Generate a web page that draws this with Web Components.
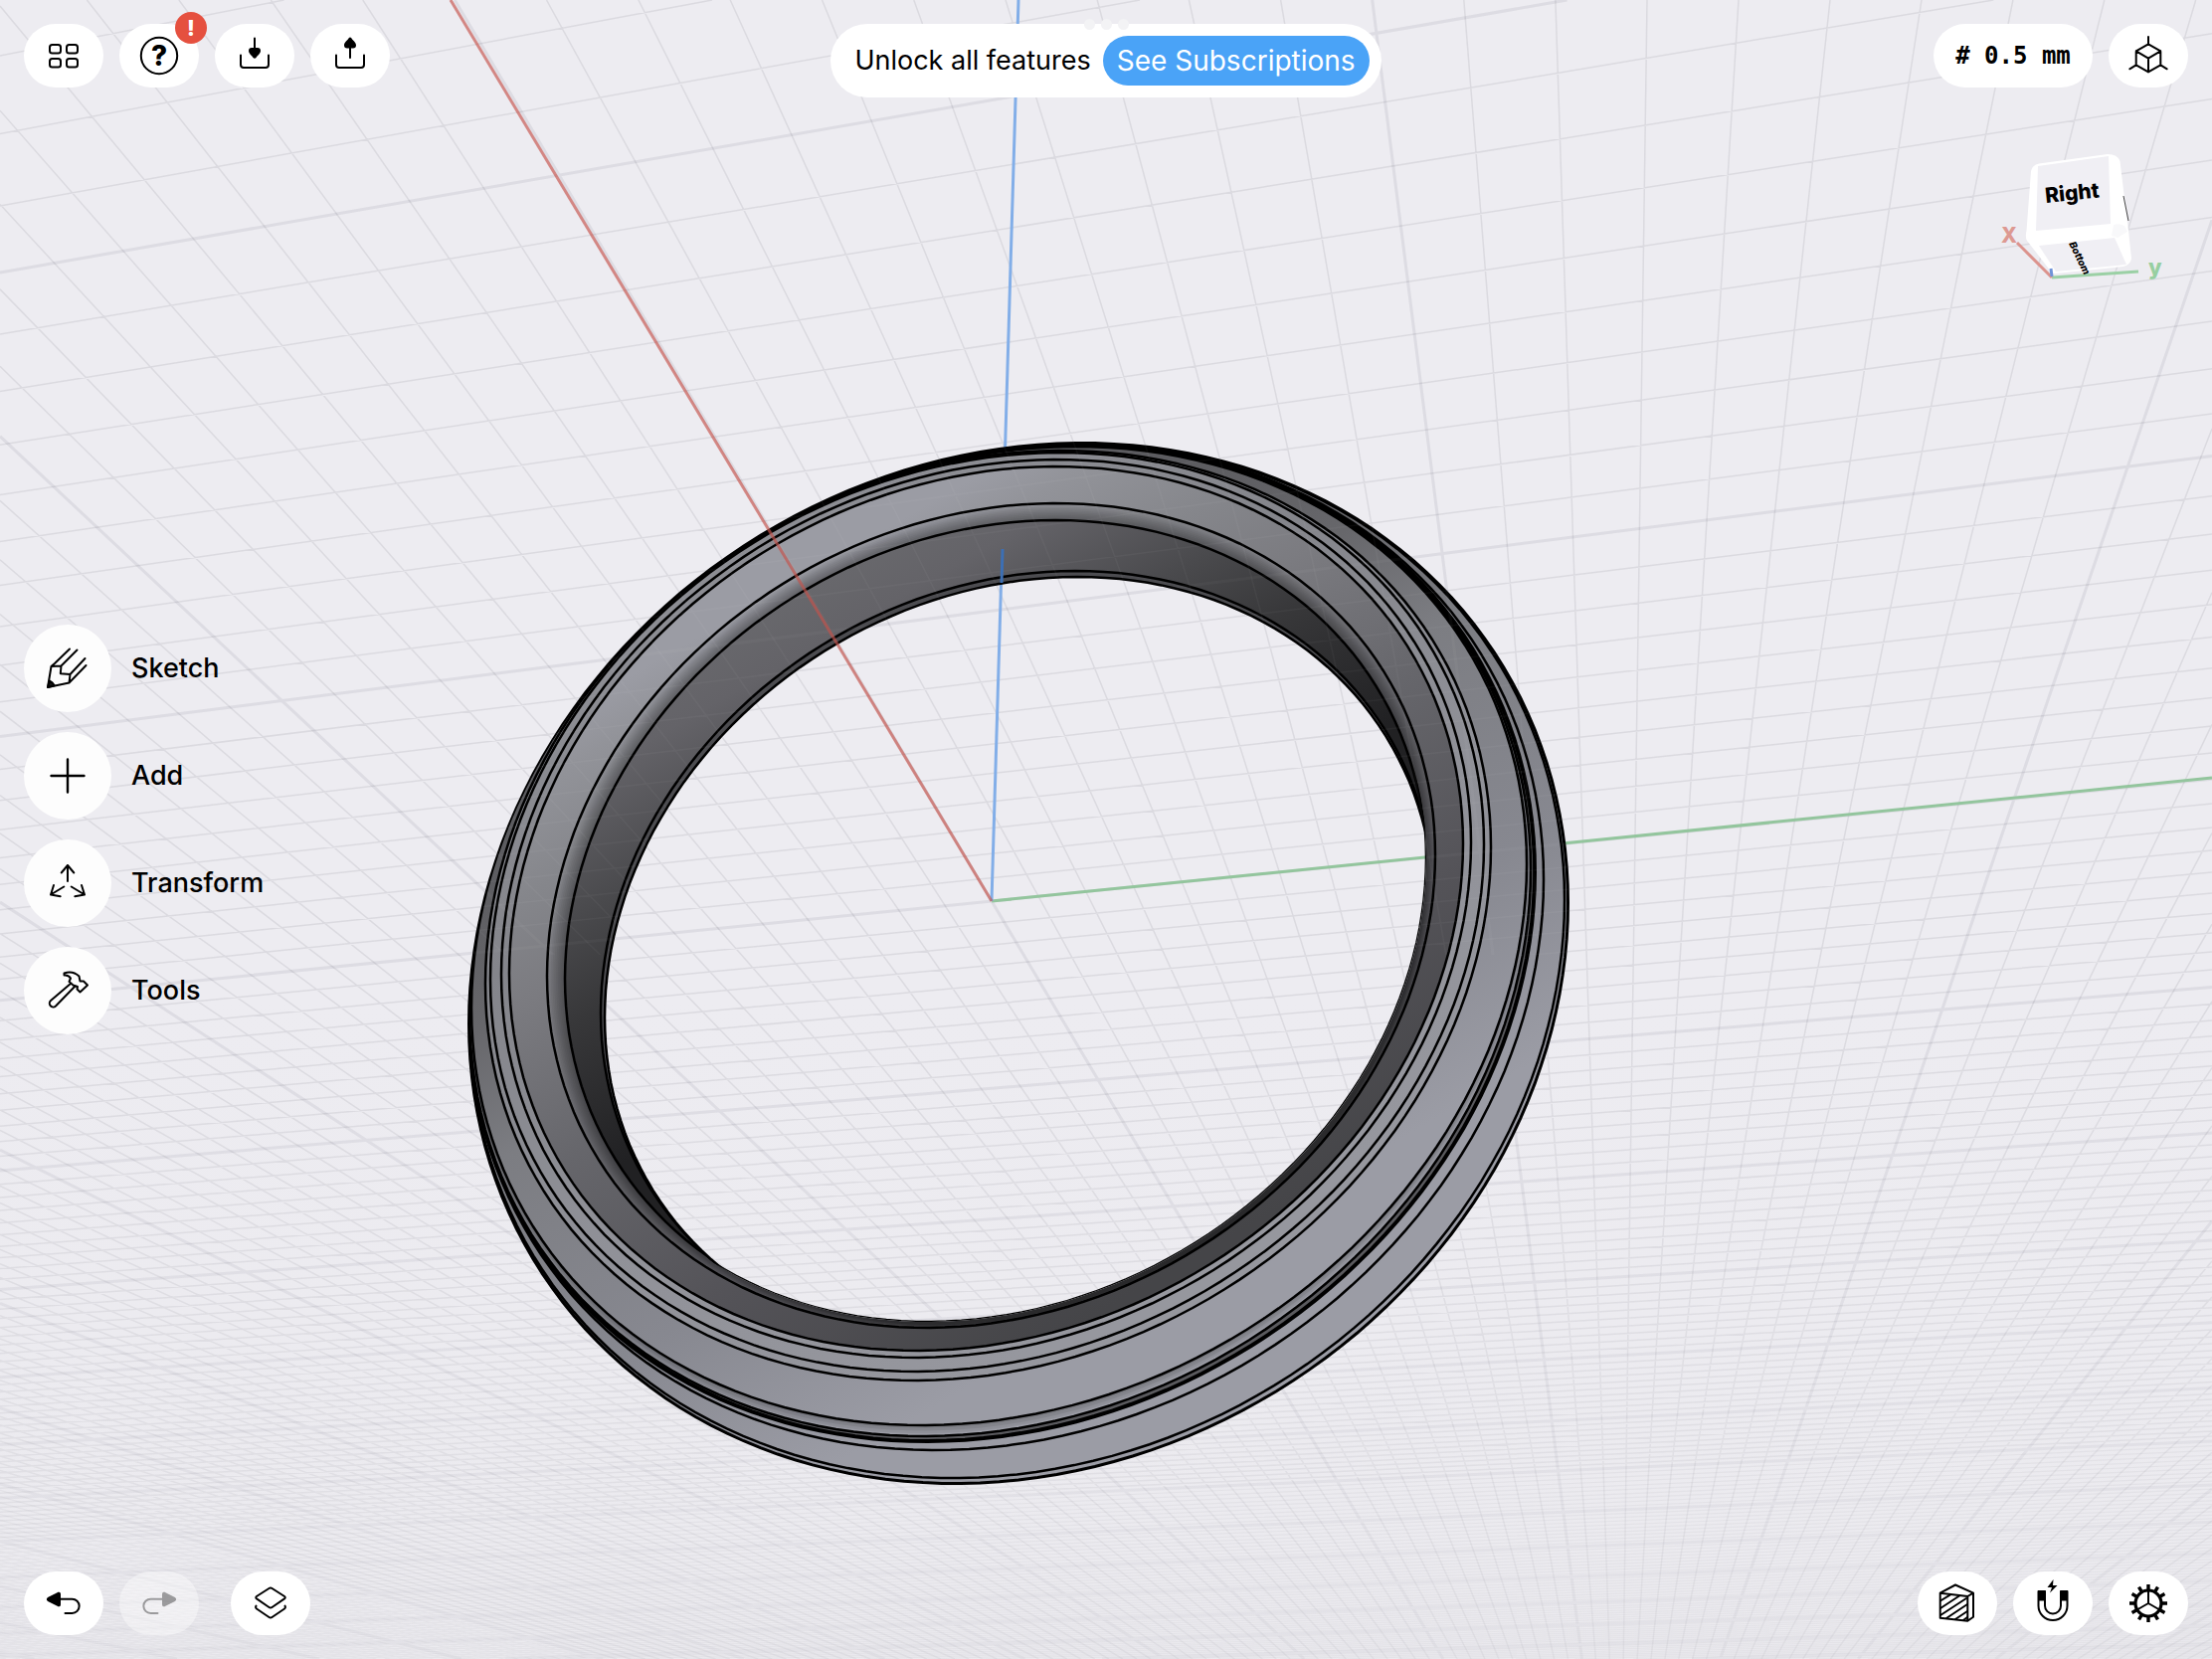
<!DOCTYPE html>
<html lang="en">
<head>
<meta charset="utf-8">
<title>Modeling workspace</title>
<style>
    body
    {
        margin: 0;
        background: #edecf1;
        color: #000;
        font-family: Inter, "Liberation Sans", sans-serif;
    }
</style>
</head>
<body>
<cad-workspace>
    <model-view slot="scene"></model-view>

    <tool-group slot="top-left">
        <pill-button icon="grid" label="Designs"></pill-button>
        <pill-button icon="help" label="Help" badge="!"></pill-button>
        <pill-button icon="import" label="Import"></pill-button>
        <pill-button icon="export" label="Export"></pill-button>
    </tool-group>

    <subscribe-banner slot="top-center">
        Unlock all features
        <span slot="action">See Subscriptions</span>
    </subscribe-banner>

    <tool-group slot="top-right">
        <pill-button wide label="Grid snap"># 0.5 mm</pill-button>
        <pill-button icon="iso" label="Views"></pill-button>
    </tool-group>

    <side-menu slot="left">
        <menu-item icon="sketch">Sketch</menu-item>
        <menu-item icon="add">Add</menu-item>
        <menu-item icon="transform">Transform</menu-item>
        <menu-item icon="tools">Tools</menu-item>
    </side-menu>

    <view-cube slot="right"></view-cube>

    <tool-group slot="bottom-left">
        <pill-button icon="undo" label="Undo"></pill-button>
        <pill-button icon="redo" label="Redo" disabled></pill-button>
        <pill-button icon="layers" label="Items" apart></pill-button>
    </tool-group>

    <tool-group slot="bottom-right">
        <pill-button icon="section" label="Section view"></pill-button>
        <pill-button icon="magnet" label="Snapping"></pill-button>
        <pill-button icon="gear" label="Settings"></pill-button>
    </tool-group>
</cad-workspace>

<script>
(function(){

function makeTemplate(html)
{
    const template = document.createElement('template');
    template.innerHTML = html;
    return template;
}

class BaseElement extends HTMLElement {
    constructor()
    {
        super();
        this._root = this.attachShadow({mode: 'open'});
        this._root.appendChild(this.constructor.template.content.cloneNode(true));
    }
}

function gearTeeth()
{
    let d = '';
    for(let i = 0; i < 12; i++)
    {
        const x = Math.sin(i * Math.PI / 6), y = Math.cos(i * Math.PI / 6);
        d += `M${20 + 14 * x} ${20 + 14 * y}L${20 + 19 * x} ${20 + 19 * y}`;
    }
    return d;
}

//Pill icons are drawn on 40x40, menu icons on 48x48
const icons = {
    grid: '<g><rect x="6" y="9" width="11" height="8.5" rx="2.5"/><rect x="23" y="9" width="11" height="8.5" rx="2.5"/><rect x="6" y="23" width="11" height="8.5" rx="2.5"/><rect x="23" y="23" width="11" height="8.5" rx="2.5"/></g>',
    help: '<circle cx="20" cy="20" r="18.2"/><text x="20" y="30" text-anchor="middle" font-size="28" font-weight="800" fill="#000" stroke="none">?</text>',
    import: '<path d="M6 19.5v9.5q0 3 3 3h22q3 0 3-3v-9.5M20 2.5V14"/><path fill="#000" stroke="none" d="M14 15q0-3 3-3h6q3 0 3 3c0 3-3 4.500-4.500 7q-1.500 1.500-3 0C17 19.500 14 18 14 15z"/>',
    export: '<path d="M6 19.5v9.5q0 3 3 3h22q3 0 3-3v-9.5M20 10v12"/><path fill="#000" stroke="none" d="M14 9.500q0 3 3 3h6q3 0 3-3c0-3-3-4.500-4.500-7q-1.500-1.800-3 0C17 5 14 6.500 14 9.500z"/>',
    iso: '<path d="M20 8.400L32.300 15.300V29.400L20 36.400 7.700 29.400V15.300zM7.700 15.300L20 22.700 32.300 15.300M20 22.700V36.400M20 8.400V1M7.700 29.400L1.300 33.300M32.300 29.400L38.700 33.300"/>',
    undo: '<path fill="#000" d="M4.500 15L14.500 9.800q1.500-.6 1.500 1V21.200q0 1.600-1.500 1L4.500 17q-1.300-1 0-2z"/><path d="M16 15.700H28.500a7.100 7.100 0 0 1 0 14.300H21.500"/>',
    redo: '<path fill="#000" d="M35.500 15L25.500 9.800q-1.500-.6-1.500 1V21.200q0 1.600 1.500 1L35.500 17q1.300-1 0-2z"/><path d="M24 15.700H11.500a7.100 7.100 0 0 0 0 14.300H18.500"/>',
    layers: '<path d="M18.500 5q1.500-1 3 0L34 13q1.500 1.200 0 2.400L21.500 24q-1.500 1-3 0L6 15.400q-1.500-1.200 0-2.400zM5.500 22.500q-1 1.800 .5 3L18.500 34q1.500 1 3 0L34 25.500q1.500-1.200 .5-3"/>',
    section: '<path d="M2.700 9.700L18 1.500 36 9.700V33.700L30.300 37.700 2.700 34.700zM2.700 9.700L30.300 13V37.700M30.300 13L36 9.700"/><path d="M3 17.500L13 11.300M3 25L22 12.500M3 32L29 15M9 35L30 21M18 36L30 28M26 37L30 34"/>',
    magnet: '<path d="M5.500 8h6.500v14.500a8 8 0 0 0 16 0V8h6.500v14.500a14.500 14.500 0 0 1-29 0z"/><path fill="#000" stroke="none" d="M5 7h7.500v10.500H5zM27.500 7H35v10.500h-7.500zM20.500-4L14.500 4h4.500l-2 5.500L24.500 2H20z"/>',
    gear: `<circle cx="20" cy="20" r="13" stroke-width="3.200"/><path stroke-width="3.400" stroke-linecap="butt" d="${gearTeeth()}"/><path d="M20 20V7M20 20L8.700 26.500M20 20L31.300 26.500"/>`,
    sketch: '<path d="M26 4.500L11 19 7.500 22 4 43 25.500 38.500 42.500 21M7.500 22L17.500 21.500 16.800 29.200 26.500 30 25.500 38.500M17.500 21.500L33.500 5.500M26.500 30L41.500 14"/><path fill="#161616" d="M5.700 36.500q3 1 5 4.800L4 43z"/>',
    add: '<path stroke-width="2.400" d="M24 7.500v33M7.500 24h33"/>',
    transform: '<path d="M24 22V6M17.700 13.500L24 6 30.300 13.500M20.300 27.500L7 35.500M10 26L7 35.500 16.700 37.300M27.700 27.500L41 35.500M38 26L41 35.500 31.300 37.300"/>',
    tools: '<path d="M27.500 16.500L7 34a3.700 3.700 0 0 0 5 5.500L31 20M20.500 6.500Q29 3.500 35.500 9.500L36.500 14.500 40 14.500 44 18.500 36.500 25.500 33.500 22.500 34 20 29.500 18.500 25.500 15 27 11.500Q25 8 20.500 8.500z"/>'
};

function iconSvg(name, size)
{
    return `<svg viewBox="0 0 ${size} ${size}" width="${size}" height="${size}" aria-hidden="true" fill="none" stroke="#000" stroke-width="2" stroke-linecap="round" stroke-linejoin="round">${icons[name]}</svg>`;
}

customElements.define('cad-workspace', class extends BaseElement {
    static template = makeTemplate(`
<style>
    :host{
        display: grid;
        grid-template-rows: auto 1fr auto;
        min-height: 100vh;
        position: relative;
        isolation: isolate;
        overflow: hidden;
    }

    .scene{
        position: absolute;
        inset: 0;
        z-index: -1;
    }

    header{
        display: grid;
        grid-template-columns: 1fr auto 1fr;
        align-items: start;
        padding: 24px 24px 0;
    }

    main{
        display: flex;
        justify-content: space-between;
        padding: 0 24px;
    }

    main .left{ align-self: center; }
    main .right{ padding: 52px 20px 0 0; }
    .end{ justify-self: end; }

    footer{
        display: flex;
        justify-content: space-between;
        padding: 10px 24px 24px;
    }
</style>
<div class="scene"><slot name="scene"></slot></div>
<header>
    <slot name="top-left"></slot>
    <slot name="top-center"></slot>
    <div class="end"><slot name="top-right"></slot></div>
</header>
<main>
    <div class="left"><slot name="left"></slot></div>
    <div class="right"><slot name="right"></slot></div>
</main>
<footer>
    <slot name="bottom-left"></slot>
    <slot name="bottom-right"></slot>
</footer>`);
});

customElements.define('tool-group', class extends BaseElement {
    static template = makeTemplate(`
<style>
    :host{
        display: flex;
        gap: 16px;
    }
</style>
<slot></slot>`);
});

customElements.define('pill-button', class extends BaseElement {
    static template = makeTemplate(`
<style>
    :host{
        display: block;
        position: relative;
    }

    :host([apart]){ margin-left: 16px; }

    button{
        display: flex;
        align-items: center;
        justify-content: center;
        width: 80px;
        height: 64px;
        padding: 0;
        border: 0;
        border-radius: 32px;
        background: #fff;
        color: #000;
        font: bold 24px/32px "DejaVu Sans Mono", "Liberation Mono", monospace;
        white-space: pre;
    }

    :host([wide]) button{ width: 160px; }
    :host([disabled]) button{ background: rgba(255, 255, 255, .4); }
    :host([disabled]) svg{ opacity: .35; }

    svg{
        overflow: visible;
        font-family: Inter, sans-serif;
    }

    .badge{
        position: absolute;
        top: -12px;
        right: -8px;
        width: 32px;
        height: 32px;
        border-radius: 50%;
        background: #e5503f;
        color: #fff;
        font: 800 22px/32px Inter, sans-serif;
        text-align: center;
    }
</style>
<button type="button"><slot></slot></button>`);

    connectedCallback()
    {
        const button = this._root.querySelector('button');
        const icon = this.getAttribute('icon');

        button.setAttribute('aria-label', this.getAttribute('label'));
        button.disabled = this.hasAttribute('disabled');

        if(icon)
            button.innerHTML = iconSvg(icon, 40);

        if(this.hasAttribute('badge'))
        {
            const badge = document.createElement('span');
            badge.className = 'badge';
            badge.textContent = this.getAttribute('badge');
            this._root.appendChild(badge);
        }
    }
});

customElements.define('subscribe-banner', class extends BaseElement {
    static template = makeTemplate(`
<style>
    :host{
        display: flex;
        align-items: center;
        gap: 12px;
        box-sizing: border-box;
        height: 74px;
        padding: 0 12px 0 24px;
        border-radius: 37px;
        background: #fff;
        font-size: 27px;
        line-height: 36px;
        white-space: nowrap;
        position: relative;
    }

    button{
        height: 50px;
        padding: 0 14px;
        border: 0;
        border-radius: 25px;
        background: #4aa3f7;
        color: #fff;
        font: inherit;
        font-size: 28px;
    }

    /* multitasking handle */
    .dots{
        position: absolute;
        top: -5px;
        left: 0;
        right: 0;
        display: flex;
        justify-content: center;
        gap: 6px;
    }

    .dots i{
        width: 11px;
        height: 11px;
        border-radius: 50%;
        background: #f3f3f5;
    }
</style>
<div class="dots"><i></i><i></i><i></i></div>
<span><slot></slot></span>
<button type="button"><slot name="action"></slot></button>`);
});

customElements.define('side-menu', class extends BaseElement {
    static template = makeTemplate(`
<style>
    :host{ display: block; }

    nav{
        display: flex;
        flex-direction: column;
        gap: 20px;
    }
</style>
<nav><slot></slot></nav>`);
});

customElements.define('menu-item', class extends BaseElement {
    static template = makeTemplate(`
<style>
    :host{ display: block; }

    button{
        display: flex;
        align-items: center;
        gap: 20px;
        padding: 0;
        border: 0;
        background: none;
        color: #000;
        font: 500 27px/36px Inter, sans-serif;
    }

    .icon{
        display: flex;
        align-items: center;
        justify-content: center;
        width: 88px;
        height: 88px;
        border-radius: 50%;
        background: #fdfdfd;
    }
</style>
<button type="button"><span class="icon"></span><slot></slot></button>`);

    connectedCallback()
    {
        this._root.querySelector('.icon').innerHTML = iconSvg(this.getAttribute('icon'), 48);
    }
});

customElements.define('view-cube', class extends BaseElement {
    static template = makeTemplate(`
<style>
    :host{ display: block; }
    svg{ display: block; font-family: Inter, sans-serif; font-weight: 800; }
</style>
<svg viewBox="0 0 176 136" width="176" height="136" role="img" aria-label="Orientation cube">
    <path fill="#fff" d="M38 22q1-6 8-7.500L115 5q10 0 12.500 7L136 82 139 110q-1 6-8 8L62 125q-4 0-7-6L34 92q-2-4-.500-10z"/>
    <path fill="#f0eff4" d="M45 17L116 7 118 75 43 82z"/>
    <path fill="#f0eff4" d="M46 97L122 89 134 116 63 123z"/>
    <path fill="#f8f8fa" d="M121 76q6-2 11 1l3 6-10 6-6-2z"/>
    <path stroke="#444" d="M131 47L136 72"/>
    <path stroke="#9bd0a5" stroke-width="3" d="M59 129L146 123"/>
    <path stroke="#dc938d" stroke-width="3" d="M59 129L24 94"/>
    <path stroke="#6f93d8" stroke-width="3" d="M59 128L58 120"/>
    <text transform="translate(53 54) rotate(-6)" font-size="21">Right</text>
    <text transform="translate(76 95) rotate(64)" font-size="10" font-style="italic">Bottom</text>
    <text x="8" y="94" font-size="21" fill="#dd9992">X</text>
    <text x="156" y="126" font-size="22" fill="#97cfa1">y</text>
</svg>`);
});

/* ---- 3D view ---- */

const VIEW = {width: 2224, height: 1668};
const ORIGIN = [997, 906];

//Vanishing points and perspective factors of the ground plane axes
const VANISH_X = [1628, 1965];
const VANISH_Y = [-9930, 2000];
const SHRINK_X = -0.0204;
const SHRINK_Y = -0.0043;

function project(u, v)
{
    return [0, 1].map(i => ORIGIN[i] + u * SHRINK_X * VANISH_X[i] + v * SHRINK_Y * VANISH_Y[i])
        .concat(1 + u * SHRINK_X + v * SHRINK_Y);
}

//Cuts the line through a homogeneous point and a vanishing point to the view
function clipLine(p, q)
{
    const a = p[1] - q[1] * p[2];
    const b = q[0] * p[2] - p[0];
    const c = p[0] * q[1] - p[1] * q[0];
    const hits = [];

    [0, VIEW.width].forEach(x => {
        const y = -(a * x + c) / b;
        if(y >= 0 && y <= VIEW.height)
            hits.push([x, y]);
    });
    [0, VIEW.height].forEach(y => {
        const x = -(b * y + c) / a;
        if(x > 0 && x < VIEW.width)
            hits.push([x, y]);
    });

    return hits.length < 2 ? '' : `M${hits[0].map(n => n.toFixed(1))}L${hits[1].map(n => n.toFixed(1))}`;
}

function gridPaths()
{
    let minor = '', far = '', major = '';

    for(let i = -420; i <= 420; i++)
    {
        const lines = clipLine(project(0, i), VANISH_X) + (i > -230 && i < 100 ? clipLine(project(i, 0), VANISH_Y) : '');
        if(i % 10 === 0)
            major += lines;
        else if(Math.abs(i) > 60)
            far += lines;
        else
            minor += lines;
    }

    return `<path d="${minor}" stroke-width="1.500" stroke-opacity=".09"/>
        <path d="${far}" stroke-width="1.200" stroke-opacity=".07"/>
        <path d="${major}" stroke-width="3" stroke-opacity=".08"/>`;
}

//Ring edges: left, right, top, bottom, tilt
const edges = {
    outer:   [471, 1577, 445, 1492, .116],
    rim:     [472, 1573, 446, 1486, .118],
    collar:  [472, 1552, 447, 1458, .135],
    grooveB: [472, 1543, 447, 1449, .142],
    grooveA: [472, 1539, 448, 1444, .145],
    body:    [474, 1535, 449, 1433, .147],
    step4:   [488, 1499, 453, 1388, .147],
    step3:   [493, 1492, 455, 1379, .147],
    step2:   [504, 1479, 462, 1365, .147],
    step1:   [512, 1471, 469, 1358, .147],
    fillet:  [550, 1443, 506, 1335, .147],
    lip:     [560, 1434, 515, 1329, .147],
    bore:    [568, 1434, 523, 1332, .140],
    backB:   [604, 1442, 574, 1354, .140],
    backA:   [608, 1442, 580, 1357, .140]
};

function ellipse(edge)
{
    const [left, right, top, bottom, tilt] = edge;
    const phase = Math.PI / 2 + Math.asin(tilt);
    const points = [];

    for(let i = 0; i < 180; i++)
    {
        const t = i * Math.PI / 90;
        const x = (left + right) / 2 + (right - left) / 2 * Math.cos(t);
        const y = (top + bottom) / 2 + (bottom - top) / 2 * Math.cos(t - phase);
        points.push(x.toFixed(1) + ' ' + y.toFixed(1));
    }

    return 'M' + points.join('L') + 'Z';
}

function blend(a, b, t)
{
    return a.map((n, i) => n + (b[i] - n) * t);
}

function gradient(id, stops)
{
    //all shading runs along one light direction, from upper left to lower right
    const at = stops.map(([pos, color]) => `<stop offset="${(pos - 900) / 900}" stop-color="${color}"/>`).join('');
    return `<linearGradient id="${id}" gradientUnits="userSpaceOnUse" x1="447" y1="778" x2="894" y2="1556">${at}</linearGradient>`;
}

function shape(name, fill, width = 2.5)
{
    return `<path d="${ellipse(edges[name])}" fill="${fill}" stroke="#000" stroke-width="${width}"/>`;
}

function softBand(from, to, dark, steps = 10)
{
    let out = '';
    for(let i = 1; i <= steps; i++)
        out += `<path d="${ellipse(blend(edges[from], edges[to], i / steps))}" fill="#000" fill-opacity="${dark / steps}"/>`;
    return out;
}

function ring()
{
    return shape('outer', 'url(#side)', 4)
        + shape('rim', 'url(#side)')
        + shape('collar', 'url(#side)')
        + shape('grooveB', '#5a5a5e', 4)
        + shape('grooveA', 'url(#side)')
        + softBand('grooveA', 'body', .3, 4)
        + shape('body', 'url(#side)')
        + shape('step4', 'url(#step)')
        + shape('step3', 'url(#step)')
        + shape('step2', 'url(#step)')
        + shape('step1', 'url(#face)')
        + shape('fillet', 'url(#face)')
        + softBand('fillet', 'bore', .45)
        + `<g clip-path="url(#front)">`
        + shape('bore', 'url(#inside)')
        + shape('backB', '#4c4c50')
        + `</g>`;
}

customElements.define('model-view', class extends BaseElement {
    static template = makeTemplate(`
<style>
    :host{
        display: block;
        height: 100%;
    }

    svg{
        display: block;
        width: 100%;
        height: 100%;
    }
</style>
<svg viewBox="0 0 ${VIEW.width} ${VIEW.height}" preserveAspectRatio="xMidYMid slice" role="img" aria-label="Ring model on the ground grid">
    <defs>
        ${gradient('side', [[1000, '#5c5c60'], [1140, '#67676b'], [1265, '#7c7d82'], [1500, '#878890'], [1700, '#9b9ca5']])}
        ${gradient('step', [[900, '#8c8d93'], [1100, '#84858b'], [1400, '#909198'], [1700, '#96979e']])}
        ${gradient('face', [[907, '#9b9ca4'], [954, '#929399'], [1048, '#85868b'], [1140, '#7b7b80'], [1300, '#66666b'], [1495, '#545358'], [1700, '#454548']])}
        ${gradient('inside', [[907, '#69696d'], [974, '#646368'], [1090, '#4a4a4d'], [1180, '#38383a'], [1330, '#212123']])}
        <linearGradient id="haze" x1="0" y1="0" x2="0" y2="1">
            <stop offset=".6" stop-color="#e9e8ec" stop-opacity="0"/>
            <stop offset="1" stop-color="#e9e8ec" stop-opacity=".5"/>
        </linearGradient>
        <clipPath id="front"><path d="${ellipse(edges.lip)}"/></clipPath>
        <clipPath id="back"><path d="${ellipse(edges.backA)}" clip-path="url(#front)"/></clipPath>
        <clipPath id="upper"><rect width="2224" height="960"/></clipPath>
        <mask id="solid">
            <path fill="#fff" stroke="#fff" stroke-width="2" d="${ellipse(edges.outer)}"/>
            <path fill="#000" clip-path="url(#front)" d="${ellipse(edges.backA)}"/>
        </mask>
        <mask id="open">
            <rect fill="#fff" width="2224" height="1668"/>
            <path fill="#000" d="${ellipse(edges.outer)}"/>
            <path fill="#fff" clip-path="url(#front)" d="${ellipse(edges.backA)}"/>
        </mask>
    </defs>
    <rect width="2224" height="1668" fill="#edecf1"/>
    <g fill="none" stroke="#28283c">${gridPaths()}</g>
    <rect width="2224" height="1668" fill="url(#haze)"/>
    <g mask="url(#open)" stroke-width="3">
        <path stroke="#93c59d" d="M997 906L2224 782"/>
        <path stroke="#82aee8" d="M997 906L1024 0"/>
    </g>
    <g mask="url(#solid)">${ring()}</g>
    <g fill="none" stroke="#000" stroke-width="2.500">
        <path d="${ellipse(edges.backA)}" clip-path="url(#front)"/>
        <path d="${ellipse(edges.lip)}" clip-path="url(#back)"/>
    </g>
    <g clip-path="url(#upper)"><g mask="url(#solid)" fill="none" stroke="#fff" opacity=".4">${gridPaths()}</g></g>
    <path stroke="#3c6fb4" stroke-width="3" d="M1008 552L1007 586"/>
    <path stroke="#c4524a" stroke-width="3" stroke-opacity=".65" d="M997 906L453 0"/>
</svg>`);
});

})();
</script>
</body>
</html>
